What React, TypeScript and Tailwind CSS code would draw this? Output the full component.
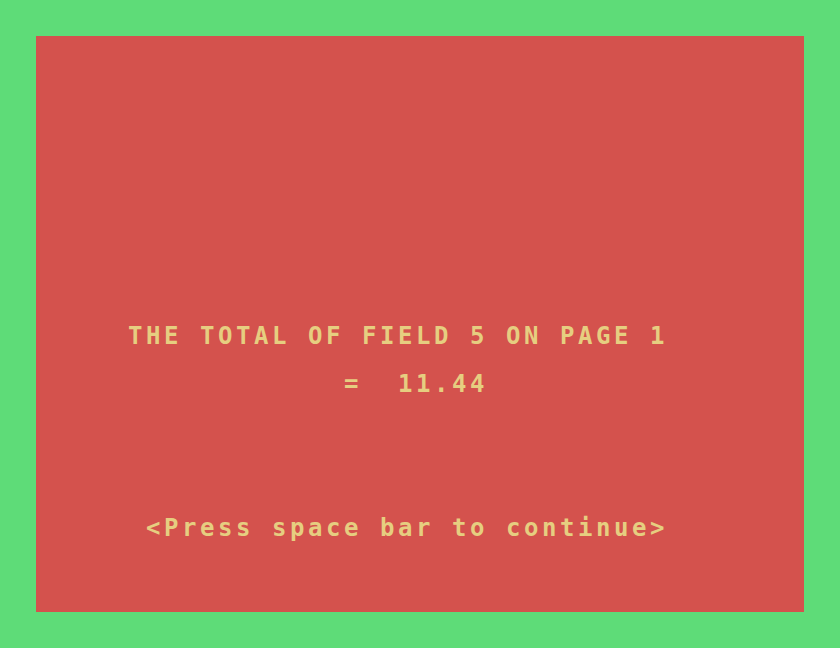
export default function App() {
  const line = "h-[24px] leading-[24px] whitespace-pre text-[24px] font-bold tracking-[3.55px] text-[#e6ce80] font-['DejaVu_Sans_Mono',monospace]";
  return (
    <div className="w-[840px] h-[648px] bg-[#5edc78] p-[36px]">
      <div className="w-full h-full bg-[#d4524d] pt-[288px] pl-[92px] flex flex-col">
        <div className={line}>THE TOTAL OF FIELD 5 ON PAGE 1</div>
        <div className={line + " mt-[24px]"}>{"            =  11.44"}</div>
        <div className={line + " mt-[120px]"}>{" <Press space bar to continue>"}</div>
      </div>
    </div>
  );
}
